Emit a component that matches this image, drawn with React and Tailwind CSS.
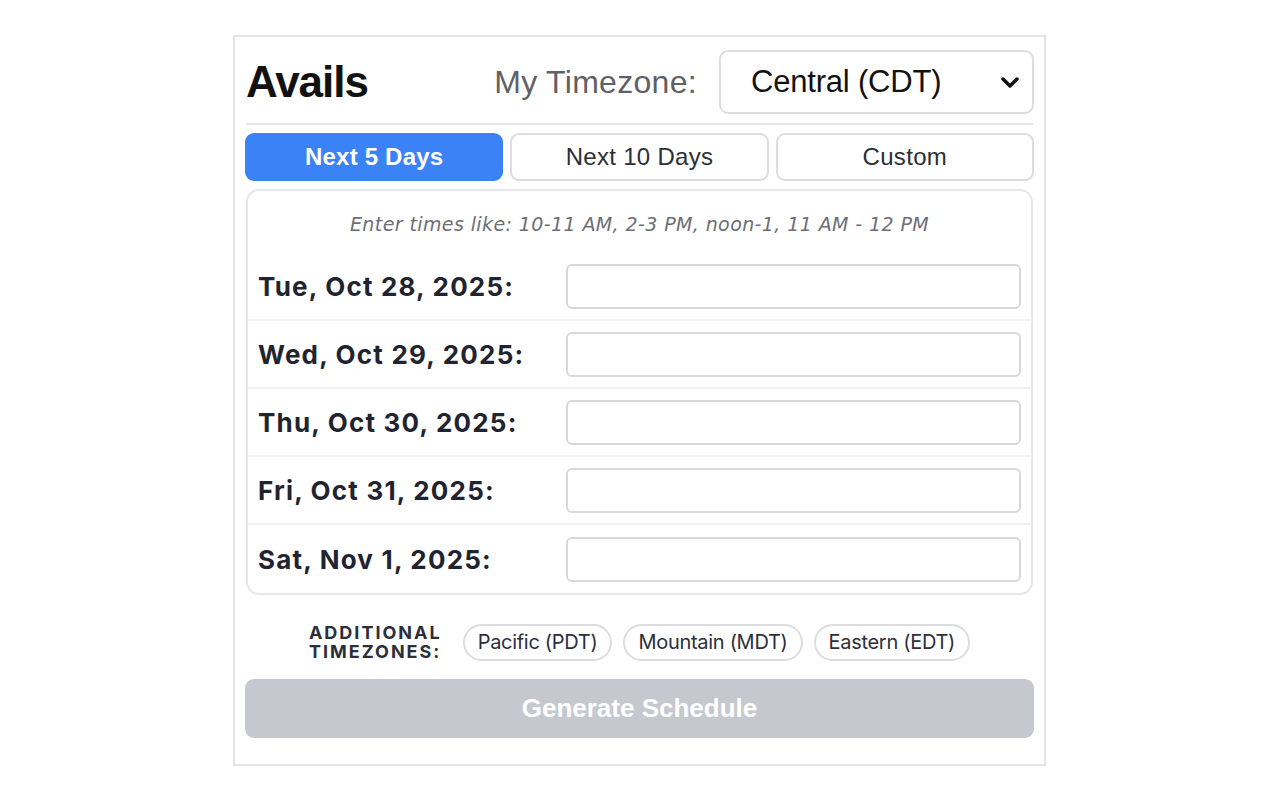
import React from "react";

const days = [
  "Tue, Oct 28, 2025:",
  "Wed, Oct 29, 2025:",
  "Thu, Oct 30, 2025:",
  "Fri, Oct 31, 2025:",
  "Sat, Nov 1, 2025:",
];

export default function App() {
  return (
    <div className="w-[1280px] h-[800px] bg-white flex justify-center" style={{ fontFamily: '"Liberation Sans", Arial, sans-serif' }}>
      <div className="mt-[35px] ml-[-1px] w-[813px] h-[731px] border-2 border-[#e4e4e6] px-[10px] pt-[13px] flex flex-col">
        <div className="flex items-center h-[64px]">
          <h1 className="ml-[1px] text-[44px] font-bold tracking-[-1px] text-[#111111] leading-none">Avails</h1>
          <span className="ml-auto text-[32px] tracking-[0.3px] text-[#5f6166] mr-[22px]">My Timezone:</span>
          <div className="w-[315px] h-[64px] border-2 border-[#dcdde0] rounded-[9px] flex items-center pl-[30px] pr-[10px]">
            <span className="text-[31px] tracking-[-0.2px] text-[#111111]">Central (CDT)</span>
            <svg className="ml-auto" width="24" height="24" viewBox="0 0 24 24" fill="none" stroke="#111" strokeWidth="3.5" strokeLinecap="round" strokeLinejoin="round">
              <path d="M5 9l7 7 7-7" />
            </svg>
          </div>
        </div>
        <div className="mt-[9px] mx-[1px] h-[2px] bg-[#e4e5e8]" />
        <div className="mt-[8px] grid grid-cols-3 gap-[7px] h-[48px]">
          <div className="bg-[#3b82f6] rounded-[9px] flex items-center justify-center text-white font-bold text-[24px] tracking-[0.2px]">Next 5 Days</div>
          <div className="border-2 border-[#dcdde0] rounded-[9px] flex items-center justify-center text-[#2b2f36] text-[24px] tracking-[0.3px]">Next 10 Days</div>
          <div className="border-2 border-[#dcdde0] rounded-[9px] flex items-center justify-center text-[#2b2f36] text-[24px] tracking-[0.3px]">Custom</div>
        </div>
        <div className="mt-[8px] mx-[1px] border-2 border-[#e6e7ea] rounded-[13px] flex flex-col">
          <div className="h-[62px] flex items-center justify-center italic text-[19px] tracking-[0.4px] text-[#6b6e75] pt-[5px]" style={{ fontFamily: '"DejaVu Sans", Verdana, sans-serif' }}>
            Enter times like: 10-11 AM, 2-3 PM, noon-1, 11 AM - 12 PM
          </div>
          {days.map((d, i) => (
            <div key={d} className={"h-[68px] flex items-center pl-[10px] pr-[10px] " + (i < days.length - 1 ? "border-b-2 border-[#f0f1f3]" : "")}>
              <span className="w-[308px] text-[26px] font-bold text-[#1f2430] tracking-[1.2px]" style={{ fontFamily: 'Inter, sans-serif' }}>{d}</span>
              <div className="flex-1 h-[45px] border-2 border-[#d6d8dc] rounded-[6px] bg-white" />
            </div>
          ))}
        </div>
        <div className="mt-[28px] flex items-center justify-center" style={{ fontFamily: 'Inter, sans-serif' }}>
          <div className="text-[18px] font-bold leading-[19px] tracking-[2px] text-[#2b2f3a] mr-[21px]">
            ADDITIONAL<br />TIMEZONES:
          </div>
          <div className="flex items-center gap-[11px]">
            {["Pacific (PDT)", "Mountain (MDT)", "Eastern (EDT)"].map((t) => (
              <div key={t} className="h-[37px] px-[13px] rounded-full border-2 border-[#dcdde0] flex items-center text-[20px] text-[#2b2f3a] tracking-[-0.3px]">
                {t}
              </div>
            ))}
          </div>
        </div>
        <div className="mt-[18px] h-[59px] rounded-[9px] bg-[#c5c8ce] flex items-center justify-center text-white font-bold text-[26px]">
          Generate Schedule
        </div>
      </div>
    </div>
  );
}
